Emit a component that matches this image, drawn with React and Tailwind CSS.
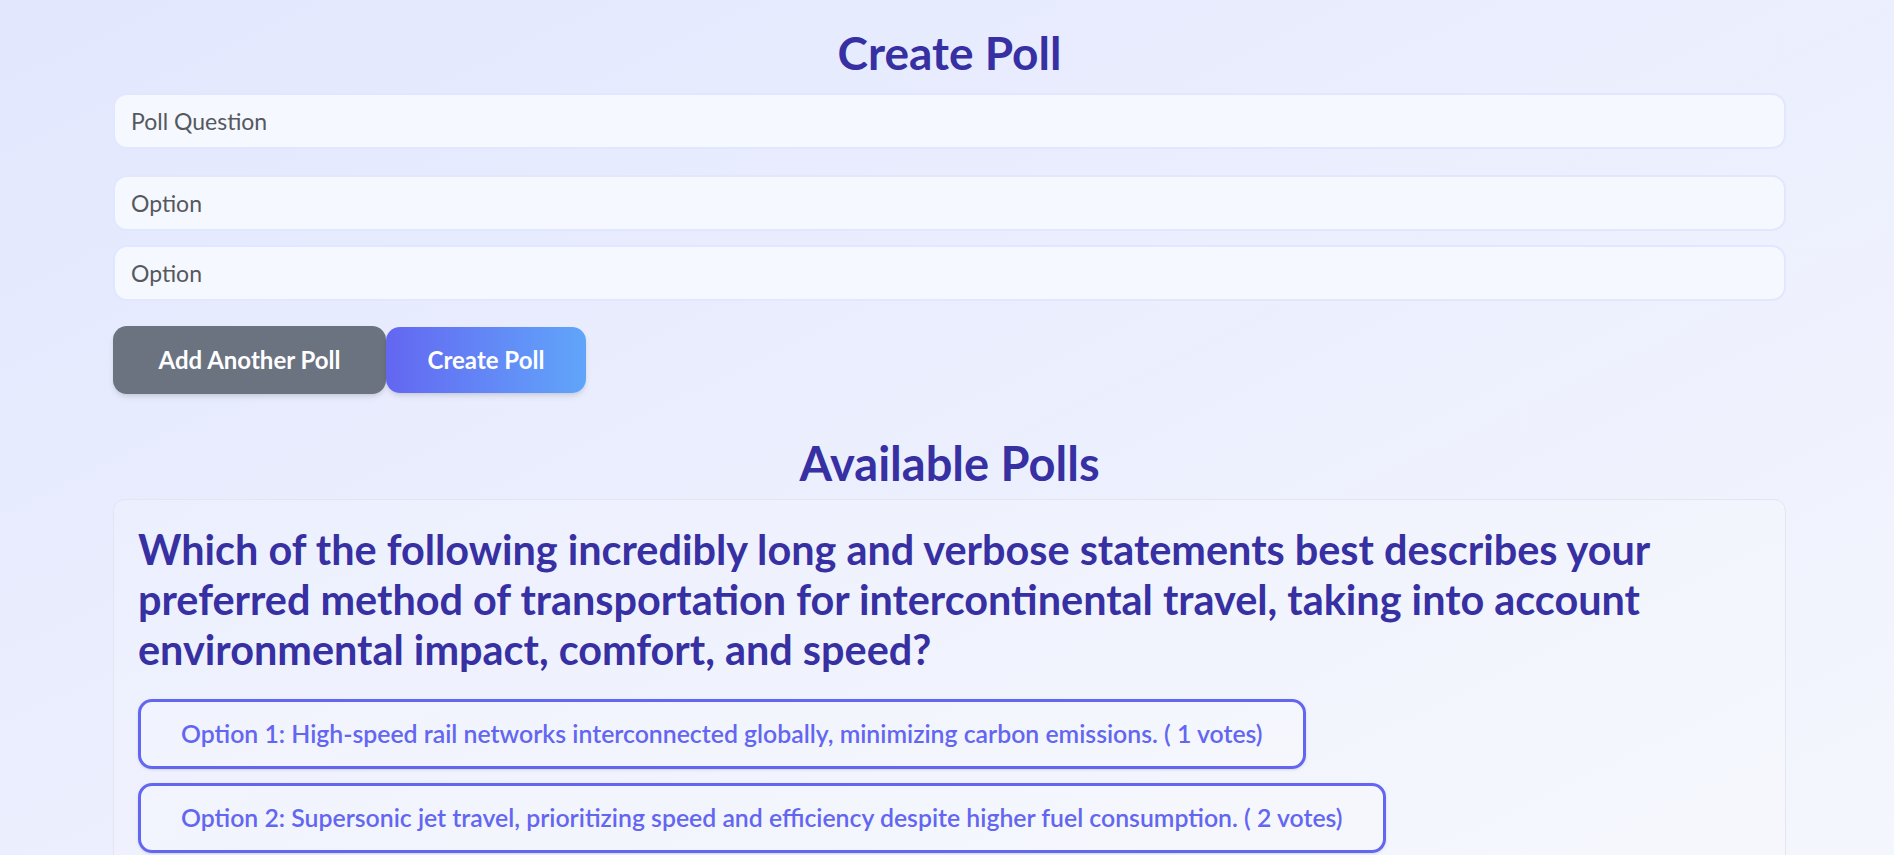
import React, { useState } from 'react';

const initialPolls = [
  {
    id: 1,
    question:
      'Which of the following incredibly long and verbose statements best describes your preferred method of transportation for intercontinental travel, taking into account environmental impact, comfort, and speed?',
    options: [
      { text: 'High-speed rail networks interconnected globally, minimizing carbon emissions.', votes: 1 },
      { text: 'Supersonic jet travel, prioritizing speed and efficiency despite higher fuel consumption.', votes: 2 },
    ],
  },
];

const App = () => {
  const [question, setQuestion] = useState('');
  const [options, setOptions] = useState(['', '']);
  const [polls, setPolls] = useState(initialPolls);

  const updateOption = (idx, value) => {
    const next = [...options];
    next[idx] = value;
    setOptions(next);
  };

  const vote = (pollId, idx) => {
    setPolls(
      polls.map((p) =>
        p.id !== pollId
          ? p
          : { ...p, options: p.options.map((o, i) => (i === idx ? { ...o, votes: o.votes + 1 } : o)) }
      )
    );
  };

  return (
    <div className="min-h-screen bg-gradient-to-br from-[#e2e7fe] to-[#f5f7fd] font-['Lato',sans-serif]">
      <div className="pl-[113px] pr-[108px] pt-[25px] pb-10">
        <h1 className="text-center text-[46px] leading-[55px] font-bold text-[#3730a3] mb-[13px]">
          Create Poll
        </h1>

        <input
          value={question}
          onChange={(e) => setQuestion(e.target.value)}
          placeholder="Poll Question"
          className="block w-full h-[56px] rounded-[14px] border-2 border-[#e0e7ff] bg-[#f5f8fe] px-[16px] text-[23px] text-gray-700 placeholder:text-[#55595f] outline-none mb-[26px]"
        />

        <div className="flex flex-col gap-[14px]">
          {options.map((opt, idx) => (
            <input
              key={idx}
              value={opt}
              onChange={(e) => updateOption(idx, e.target.value)}
              placeholder="Option"
              className="block w-full h-[56px] rounded-[14px] border-2 border-[#e0e7ff] bg-[#f5f8fe] px-[16px] text-[23px] text-gray-700 placeholder:text-[#55595f] outline-none"
            />
          ))}
        </div>

        {/* Actions */}
        <div className="flex items-center mt-[25px]">
          <button
            onClick={() => setOptions([...options, ''])}
            className="h-[68px] w-[273px] rounded-[14px] bg-[#6b7280] text-white text-[24px] font-bold shadow-md"
          >
            Add Another Poll
          </button>
          <button className="h-[66px] w-[200px] rounded-[14px] bg-gradient-to-r from-[#6366f1] to-[#60a5fa] text-white text-[24px] font-bold shadow-md">
            Create Poll
          </button>
        </div>

        <h2 className="text-center text-[47px] leading-[55px] font-bold text-[#3730a3] mt-[42px] mb-[8px]">
          Available Polls
        </h2>

        <div className="space-y-6">
          {polls.map((poll) => (
            <div key={poll.id} className="rounded-[12px] border border-[#e3e6ee] bg-white/20 p-[24px]">
              <h3 className="text-[41.4px] leading-[50px] font-bold text-[#3730a3] mb-[25px]">
                {poll.question}
              </h3>
              <div className="flex flex-col items-start gap-[14px]">
                {poll.options.map((opt, idx) => (
                  <button
                    key={idx}
                    onClick={() => vote(poll.id, idx)}
                    className="h-[70px] rounded-[14px] border-[3px] border-[#6366f1] bg-white/20 px-[40px] text-[24.8px] font-semibold text-[#6366f1] shadow-sm"
                  >
                    Option {idx + 1}: {opt.text} ( {opt.votes} votes)
                  </button>
                ))}
              </div>
            </div>
          ))}
        </div>
      </div>
    </div>
  );
};

export default App;
